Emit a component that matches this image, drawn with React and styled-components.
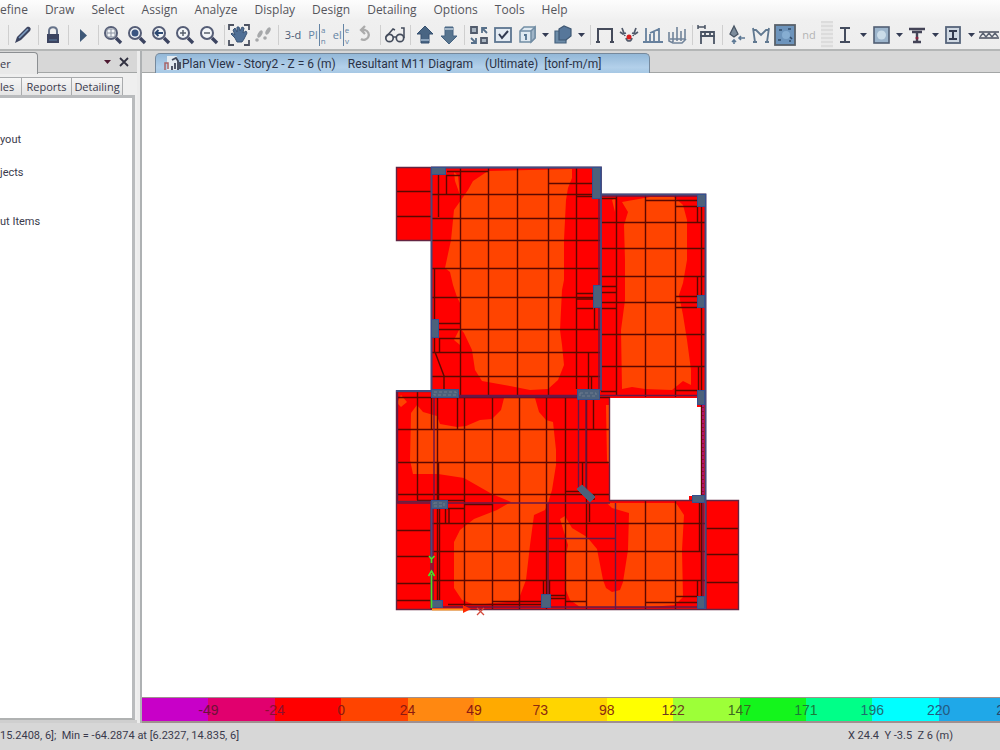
import React from "react";
import styled, { createGlobalStyle } from "styled-components";

const NAVY = "#3c4460";

const GlobalStyle = createGlobalStyle`
  * { box-sizing: border-box; }
  body {
    margin: 0;
    background: #f0f0f0;
    color: #3a3a4c;
    font-family: "Open Sans", "Noto Sans", sans-serif;
    font-size: 11px;
    line-height: 16px;
    overflow-x: hidden;
  }
  button { font: inherit; color: inherit; border: 0; padding: 0; background: none; white-space: pre; }
`;

const Shell = styled.div`
  display: flex;
  flex-direction: column;
  min-height: 100vh;
  overflow: hidden;
`;

const TopArea = styled.header`
  background: linear-gradient(#fdfdfd, #f0f0f0 20px, #ededed);
  border-bottom: 2px solid #b4b6b6;
`;

const MenuBar = styled.nav`
  display: flex;
  gap: 17px;
  height: 20px;
  align-items: center;
  overflow: hidden;
`;

const MenuItem = styled.button`
  color: #55555c;
  font-size: 12px;
  flex: none;
`;

const Toolbar = styled.div`
  display: flex;
  align-items: center;
  height: 29px;
  padding-left: 5px;
  overflow: hidden;
`;

const ToolButton = styled.button`
  flex: none;
  width: 24px;
  height: 24px;
  display: flex;
  align-items: center;
  justify-content: center;
  color: ${(p) => (p.$muted ? "#b4b4b4" : "#4c5a74")};
  svg { display: block; flex: none; }
`;

const Separator = styled.span`
  flex: none;
  width: 6px;
  height: 20px;
  background: linear-gradient(90deg, transparent 3px, #cfcfcf 3px, #cfcfcf 4px, transparent 4px);
`;

const CaretButton = styled.button`
  flex: none;
  width: 12px;
  height: 24px;
  display: flex;
  align-items: center;
  justify-content: center;
`;

const Grip = styled.span`
  flex: none;
  width: 12px;
  height: 27px;
  background: repeating-linear-gradient(#dcdcdc 0 2px, #e9e9e9 2px 4px);
`;

const SplitWord = styled.span`
  display: flex;
  align-items: center;
  color: #6484a4;
`;

const SplitEnd = styled.span`
  display: flex;
  flex-direction: column;
  margin-left: 1px;
  padding-left: 1px;
  border-left: 1px solid #6484a4;
  font-size: 8px;
  line-height: 11px;
`;

const Workspace = styled.main`
  flex: 1;
  display: flex;
`;

const Explorer = styled.aside`
  flex: none;
  width: 137px;
  display: flex;
  flex-direction: column;
  background: #efefef;
  border-bottom: 3px solid #cfcfcf;
`;

const StripBar = styled.div`
  display: flex;
  height: 22px;
  background: #d7d7d7;
  border-bottom: 1px solid #a3a6a6;
`;

const ExplorerTab = styled.button`
  width: 38px;
  height: 22px;
  margin-top: 1px;
  text-align: left;
  background: #e9e9e9;
  border: 1px solid #8c8f92;
  border-width: 1px 1px 0 0;
  border-top-right-radius: 4px;
`;

const StripTools = styled.div`
  flex: 1;
  display: flex;
  justify-content: flex-end;
  align-items: center;
  gap: 8px;
  padding-right: 8px;
  button { display: flex; }
`;

const SubTabs = styled.div`
  display: flex;
  height: 22px;
  padding-top: 4px;
`;

const SubTab = styled.button`
  width: ${(p) => p.$width}px;
  text-align: ${(p) => p.$align || "center"};
  border: 1px solid #a9abad;
  border-width: 1px 1px 0 0;
  background: linear-gradient(#f6f6f6, #e4e4e4);
`;

const TreePane = styled.div`
  flex: 1;
  margin-right: 2px;
  background: #fff;
  border: 3px solid #b9bbbd;
  border-left: 0;
  border-bottom: 2px solid #b0b2b2;
  padding-top: 34px;
  font-family: Roboto, sans-serif;
`;

const TreeItem = styled.div`
  height: 16px;
  margin-bottom: ${(p) => p.$after}px;
  white-space: pre;
`;

const Splitter = styled.div`
  flex: none;
  width: 5px;
  background: #ececec;
  border-right: 2px solid #aeb1b3;
`;

const View = styled.section`
  flex: 1;
  min-width: 0;
  display: flex;
  flex-direction: column;
  background: #fff;
`;

const ViewTab = styled.button`
  display: flex;
  align-items: center;
  width: 495px;
  height: 20px;
  margin: 2px 0 0 13px;
  padding-left: 8px;
  background: linear-gradient(#93b8d8, #b3d0ea 70%, #a6c8e4);
  border: 1px solid #76899c;
  border-bottom: 0;
  border-radius: 5px 5px 0 0;
  color: #2b3246;
  font-family: Roboto, sans-serif;
  font-size: 12px;
  svg { flex: none; }
`;

const TitlePart = styled.span`
  margin-left: ${(p) => p.$gap}px;
`;

const Canvas = styled.div`
  flex: 1;
  display: flex;
  svg { flex: 1; min-width: 0; display: block; }
`;

const Legend = styled.div`
  display: flex;
  height: 26px;
  border: 1px solid #a08f8f;
  border-width: 1px 0 2px;
  overflow: hidden;
`;

const LegendCell = styled.div`
  position: relative;
  flex: ${(p) => p.$span} 0 0;
  background: ${(p) => p.$color};
`;

const LegendLabel = styled.span`
  position: absolute;
  z-index: 1;
  right: 0;
  top: 4px;
  transform: translateX(50%);
  color: ${(p) => p.$ink};
  font-family: "Liberation Sans", Arial, sans-serif;
  font-size: 14px;
`;

const StatusBar = styled.footer`
  display: flex;
  justify-content: space-between;
  height: 27px;
  padding: 5px 47px 0 0;
  background: #d7d7d7;
  font-family: Roboto, sans-serif;
  white-space: pre;
`;

const Icon = ({ children, size = 22 }) => (
  <svg width={size} height={size} viewBox="0 0 22 22" fill="none" stroke={NAVY} strokeWidth="2" aria-hidden="true">
    {children}
  </svg>
);

const Magnifier = ({ children, fill = "#f2f5f8" }) => (
  <Icon>
    <circle cx="9" cy="9" r="6" fill={fill} strokeWidth="2" stroke="#555d76" />
    <path d="M14 14l5 5" strokeWidth="3.4" />
    {children}
  </Icon>
);

const Caret = ({ color = "#343c54" }) => (
  <svg width="7" height="4" viewBox="0 0 7 4" aria-hidden="true">
    <path d="M0 0h7L3.500 4z" fill={color} />
  </svg>
);

const icons = {
  pen: (
    <Icon>
      <path d="M3 19l2-6L15 3c2-1 5 1 3 4L9 16z" fill={NAVY} stroke="none" />
      <path d="M7 14l9-9" stroke="#7fa0c4" strokeWidth="1.600" />
    </Icon>
  ),
  lock: (
    <Icon>
      <path d="M7 11V7c0-5 8-5 8 0v4" stroke="#66738a" />
      <rect x="5" y="10" width="12" height="9" fill={NAVY} stroke="none" />
      <path d="M7 16h8" stroke="#5c80a5" strokeWidth="1" />
    </Icon>
  ),
  run: <Icon><path d="M8 5v13l7-6.500z" fill="#3e5878" stroke="none" /></Icon>,
  zoomWindow: <Magnifier><path d="M5 5h8v8H5zM9 5v8M5 9h8" stroke="#8c94a3" strokeWidth="1" /></Magnifier>,
  zoomFull: <Magnifier><circle cx="9" cy="9" r="3.500" fill="#3b5580" stroke="none" /></Magnifier>,
  zoomPrevious: <Magnifier><path d="M5 9h8M8.500 6L5.500 9l3 3" stroke="#2d4972" /></Magnifier>,
  zoomIn: <Magnifier><path d="M6 9h6M9 6v6" stroke="#58606d" strokeWidth="1.500" /></Magnifier>,
  zoomOut: <Magnifier><path d="M6 9h6" stroke="#58606d" strokeWidth="1.500" /></Magnifier>,
  pan: (
    <Icon>
      <path d="M1 6V1h5M16 1h5v5M21 16v5h-5M6 21H1v-5" stroke="#4d5362" strokeWidth="1.800" />
      <path d="M4 9l3 2-2-5 2-2 2 4V3h2l1 4 2-4 2 1-1 5 3-2 1 2-3 6-2 3H9l-2-4-4-4z" fill="#507096" stroke="#3b5576" strokeWidth="1" />
    </Icon>
  ),
  walk: (
    <Icon>
      <g fill="#a6a8aa" stroke="none">
        <ellipse cx="8" cy="10" rx="2" ry="4" transform="rotate(30 8 10)" />
        <circle cx="5" cy="16" r="1.800" />
        <ellipse cx="16" cy="7" rx="2" ry="4" transform="rotate(30 16 7)" />
        <circle cx="13" cy="14" r="1.800" />
      </g>
    </Icon>
  ),
  rotate: <Icon><path d="M7 6h4a5 5 0 1 1-4 9M11 2L7 6l4 4" stroke="#ababab" strokeWidth="2.300" /></Icon>,
  glasses: (
    <Icon>
      <circle cx="5.500" cy="14" r="3.700" stroke="#444c5c" strokeWidth="1.700" />
      <circle cx="16" cy="14" r="3.700" stroke="#444c5c" strokeWidth="1.700" />
      <path d="M9 13h3M2 13L9 5l2 1M20 14V4h-3" stroke="#444c5c" strokeWidth="1.500" />
    </Icon>
  ),
  up: <Icon><path d="M11 2l8 8h-4v9H7v-9H3z" fill="#496583" stroke="#365170" strokeWidth="1" /><path d="M7 16h8" stroke="#8ba3bc" /></Icon>,
  down: <Icon><path d="M11 20l-8-8h4V3h8v9h4z" fill="#58758f" stroke="#456381" strokeWidth="1" /><path d="M7 5h8" stroke="#a4b7c9" /></Icon>,
  shrink: (
    <Icon>
      <path d="M3 3h6v6H3zM13 14h6v5h-6z" fill="#a8b4c0" stroke="#505a6b" strokeWidth="1.800" />
      <path d="M19 9l-5-5m0 5V4h5M3 14l5 5m0-5v5H3" stroke="#57708a" strokeWidth="1.800" />
    </Icon>
  ),
  options: <Icon><rect x="3" y="4" width="16" height="14" fill="#e3ebf3" stroke="#5c7590" strokeWidth="1.800" /><path d="M7 10l3 4 6-7" stroke="#303a52" /></Icon>,
  cube: (
    <Icon>
      <path d="M4 7l4-4h11v11l-4 4H4z" fill="#dfe9f1" stroke="#728da4" strokeWidth="1.500" />
      <path d="M15 7l4-4v11l-4 4z" fill="#9fb4c7" stroke="#728da4" strokeWidth="1.500" />
      <path d="M4 7h11" stroke="#728da4" strokeWidth="1.500" />
      <path d="M10 10v6M8 11h2" stroke="#54738f" strokeWidth="1.800" />
    </Icon>
  ),
  solid: (
    <Icon>
      <path d="M3 7h11v12H3z" fill="#6d8ca8" stroke="#45617d" strokeWidth="1.200" />
      <path d="M7 5l5-3 7 3v7l-5 4H7z" fill="#57779a" stroke="#3f5873" strokeWidth="1.200" />
    </Icon>
  ),
  frame: <Icon><path d="M4 19V5h14v14M2 18h4M16 18h4" stroke="#454b5b" /></Icon>,
  joint: (
    <Icon>
      <path d="M4 4l3 8M18 4l-3 8M2 8l3 2 3-1M20 8l-3 2-3-1M8 14c1 4 5 4 6 0" stroke="#515a6b" strokeWidth="1.700" />
      <circle cx="11" cy="13" r="2.500" fill="#d81e1e" stroke="none" />
    </Icon>
  ),
  bars: <Icon><path d="M1 18h20M4 18V4M8 18V10M12 18V8M17 18V4M8 9l9-4M2 18h3" stroke="#66809d" strokeWidth="1.800" /></Icon>,
  surface: <Icon><path d="M3 8v9l4 2h9l4-4M7 18V8M11 17V3M15 17V7M19 15V5M4 15h15" stroke="#71849a" strokeWidth="1.600" /></Icon>,
  deformed: (
    <Icon>
      <path d="M5 20V8h13v12M4 12h15M9 8v4M14 8v4" stroke="#4a5464" strokeWidth="1.800" />
      <path d="M2 1v4M9 1v4M2 3h7" stroke="#4a5464" strokeWidth="1.500" />
    </Icon>
  ),
  load: (
    <Icon>
      <path d="M8 2l-4 8 4 3 4-3z" fill="#7d8c9b" stroke="#485564" strokeWidth="1.300" />
      <path d="M19 14h-6M15 12l-2 2 2 2M8 20v-4M6 18l2-2 2 2" stroke="#5c7894" strokeWidth="1.600" />
    </Icon>
  ),
  moment: <Icon><path d="M3 4l2 14M19 4l-2 14M3 6h3l5 5 5-5h3M3 18h4M15 18h4" stroke="#607890" strokeWidth="1.800" /></Icon>,
  shell: (
    <Icon>
      <rect x="1" y="1" width="20" height="20" fill="#6d94bc" stroke="#59616a" strokeWidth="1.800" />
      <path d="M5 6h3M14 5h3M4 16h3M16 13l2 2M15 17h2" stroke="#304b69" strokeWidth="1.700" />
      <circle cx="12" cy="11" r="4" fill="#86add2" stroke="none" />
    </Icon>
  ),
  steel: <Icon><path d="M6 4h10M6 18h10M11 4v14" stroke="#444c5e" /></Icon>,
  concrete: <Icon><rect x="4" y="3" width="15" height="16" fill="#9db5cc" stroke="#515e73" strokeWidth="1.600" /><circle cx="11.500" cy="11" r="4.500" fill="#cbdce9" stroke="none" /></Icon>,
  composite: <Icon><path d="M3 5h16M6 8h10M11 8v9M7 18h8" stroke="#444457" strokeWidth="2.400" /><circle cx="11" cy="14" r="1.500" fill="#8a2540" stroke="none" /></Icon>,
  column: <Icon><rect x="4" y="3" width="14" height="16" fill="#cfd8e2" stroke="#56647a" strokeWidth="1.800" /><path d="M7 7h8M7 15h8M11 7v8" stroke="#333b50" /></Icon>,
  joist: <Icon><path d="M1 8h20M1 14h20" stroke="#4b5060" strokeWidth="1.600" /><path d="M2 13l3-4 3 4 3-4 3 4 3-4 3 4" stroke="#5c6473" strokeWidth="1.400" /></Icon>,
};

const ViewGlyph = () => (
  <svg width="18" height="16" viewBox="0 0 18 16" fill="none" aria-hidden="true">
    <path d="M3 0h10v14H3z" fill="#e3ebf1" />
    <path d="M1 14V7h3v6" stroke="#a86467" strokeWidth="1.500" />
    <path d="M8 4l4-2 2 3v9M8 14v-4M11 13V7M16 13V6" stroke="#3f4759" strokeWidth="1.800" />
  </svg>
);

const Stacked = ({ left, top, bottom }) => (
  <SplitWord>
    <span>{left}</span>
    <SplitEnd>
      <span>{top}</span>
      <span>{bottom}</span>
    </SplitEnd>
  </SplitWord>
);

const toolbar = [
  "|", ["pen", "Draw"], "|", ["lock", "Lock model"], "|", ["run", "Run analysis"], "|",
  ["zoomWindow", "Zoom window"], ["zoomFull", "Zoom full"], ["zoomPrevious", "Previous zoom"],
  ["zoomIn", "Zoom in"], ["zoomOut", "Zoom out"], "|", ["pan", "Pan"], ["walk", "Walk"], "|",
  ["3d", "3-d view"], ["plan", "Plan view"], ["elev", "Elevation view"], ["rotate", "Rotate view"], "|",
  ["glasses", "Perspective"], "|", ["up", "Story up"], ["down", "Story down"], "|",
  ["shrink", "Shrink objects"], ["options", "Display options"], ["cube", "Assigns"], "v", ["solid", "Shading"], "v", "|",
  ["frame", "Undeformed shape"], ["joint", "Joint loads"], ["bars", "Frame loads"], ["surface", "Shell loads"], "|",
  ["deformed", "Deformed shape"], "|", ["load", "Reactions"], ["moment", "Frame forces"], ["shell", "Shell forces"],
  ["nd", "Nd"], "#", ["steel", "Steel frame design"], "v", ["concrete", "Concrete frame design"], "v",
  ["composite", "Composite beam design"], "v", ["column", "Composite column design"], "v", ["joist", "Joist design"],
];

const glyphs = {
  "3d": "3-d",
  nd: "nd",
  plan: <Stacked left="Pl" top="a" bottom="n" />,
  elev: <Stacked left="el" top="e" bottom="v" />,
};

const menus = ["efine", "Draw", "Select", "Assign", "Analyze", "Display", "Design", "Detailing", "Options", "Tools", "Help"];

const legend = [
  ["#c800c8", "-49", "#6d1238"],
  ["#e1006e", "-24", "#8b1030"],
  ["#ff0000", "0", "#8b1a10"],
  ["#ff4400", "24", "#8b1a10"],
  ["#ff8811", "49", "#8b1a10"],
  ["#ffaa00", "73", "#8b2a10"],
  ["#ffd500", "98", "#8b2a10"],
  ["#ffff00", "122", "#6d3a20"],
  ["#9dff38", "147", "#3c6a20"],
  ["#14f51c", "171", "#1c7a38"],
  ["#00ff88", "196", "#1f6c70"],
  ["#00ffff", "220", "#245a80"],
  ["#1fa8e8", "2", "#26466a"],
];

const slabs = [
  [396, 167, 35, 73], [431, 167, 170, 230], [601, 194, 105, 204],
  [396, 391, 214, 112], [396, 501, 343, 108], [701, 397, 5, 106],
];

const lowMoment = [
  "488,171 473,181 468,190 454,210 451,240 445,268 450,272 453,285 457,297 460,303 460,328 464,333 472,350 475,370 482,381 510,386 530,390 548,389 558,380 564,365 562,345 560,330 562,290 564,280 564,240 566,200 568,188 572,178 572,169",
  "622,202 650,197 674,197 683,205 687,220 687,260 683,283 679,295 683,315 687,340 691,370 691,385 683,381 672,390 645,389 632,387 622,389 621,330 625,300 625,260 624,225 628,212",
  "411,413 417,405 423,412 437,416 440,424 457,427 466,426 480,420 492,419 501,410 504,398 535,398 539,412 546,420 553,422 556,450 556,465 552,490 548,503 545,510 534,515 530,545 526,580 518,601 495,603 475,605 462,600 454,588 454,542 460,530 474,519 497,510 511,502 492,494 464,478 438,474 413,474 410,460",
  "560,519 565,516 572,528 587,537 597,549 603,580 606,588 612,592 620,590 623,582 628,550 629,513 612,508 607,503 676,503 684,515 682,550 683,597 675,605 650,607 580,607 570,600 565,588 565,560 568,545",
  "606,405 609,405 609,465 607,460",
  "454,172 458,176 460,195 455,181",
  "612,200 615,198 615,212",
  "397,403 401,395 407,402 401,407",
  "460,328 460,345 454,340",
];

const meshLines = [
  "M396 191.500H431M396 216.500H431",
  "M460.500 168V396M488.500 168V396M517.500 168V396M548.500 168V396M576.500 168V389",
  "M431 194.500H601M431 218.500H601M431 240.500H601M431 268.500H601M431 297.500H601M431 329.500H601M431 352.500H601M431 376.500H601",
  "M438.500 175V217M446.500 175V194M434.500 268V352M446 175.500H460M447 171.500H488M548 183.500H593M576 196.500H593",
  "M439 323.500H460M439 338.500H460M439.500 338V352M435 352L444 376V390",
  "M576 293.500H593M576 299H593M576 308.500H593M594.500 308V329M588.500 352V390M591.500 376V390",
  "M616.500 194V396M645.500 194V397M675.500 194V397M701.500 207V609M601 222.500H706M601 248.500H706M601 276.500H706M601 302.500H706M601 334.500H706M601 366.500H706",
  "M601 198.500H616M645 200.500H698M675 206.500H698M697.500 206V222M601 286.500H616M601 292.500H616M601 308.500H616M675 296.500H697M675 307.500H697M697.500 276V296M698.500 366V390M675 390.500H697M601 391.500H616",
  "M417.500 391V500M437.500 397V500M464.500 397V609M492.500 397V609M519.500 397V609M546.500 397V609M565.500 397V609M586.500 400V609",
  "M396 429.500H610M396 462.500H610M396 494.500H610M396 397.500H610",
  "M431.500 397V429M457.500 397V429M438.500 462V500M593.500 400V429M582.500 462V489M594 494V500M565 491.500H580M417 500.500H464M447 508.500H464M464 504.500H492M445.500 508V523M449 508V523",
  "M396 530.500H431M396 556.500H431M396 583.500H431M396 600.500H431",
  "M431 523.500H706M431 551.500H706M431 580.500H706M437.500 508V600M439.500 508V600M448 604.500H541M492 601.500H541",
  "M645.500 501V609M675.500 501V609M589.500 503V522M697.500 580V597M675 596.500H697M645 602.500H697M550 595.500H565M550 598.500H565M565 601.500H586M543.500 580V594M549.500 580V594M699.500 503V551",
  "M706 528.500H739M706 554.500H739M706 582.500H739",
];

const beams = "M431 395.500H706M431 397H577M396 503H610M578.500 400V489M586 400V489M599 199V389M548 503V594M615.500 503V609M548 538.500H615M434 394V508M433 508V600M431 607H706M601 196H706M397.500 391V503M703 397V609";

const columnRects = [
  [431, 167, 15, 8], [592, 167, 9, 32], [697, 194, 9, 13], [593, 285, 9, 23], [697, 295, 8, 13],
  [431, 319, 8, 19], [431, 389, 28, 9], [577, 389, 23, 11], [697, 390, 8, 15], [431, 500, 17, 9],
  [692, 495, 13, 8], [431, 600, 12, 8], [541, 594, 10, 14], [697, 596, 8, 13],
];

const PlanDrawing = () => (
  <svg viewBox="142 73 858 624" role="img" aria-label="Resultant M11 contours on the floor plan">
    <g fill="#ff0000">
      {slabs.map(([x, y, w, h]) => <rect key={`${x}-${y}`} x={x} y={y} width={w} height={h} />)}
    </g>
    <g fill="#ff4400">
      {lowMoment.map((points) => <polygon key={points} points={points} />)}
    </g>
    <rect x="610" y="398" width="92" height="102" fill="#fff" />
    <path d="M697 397h6v10h-6zM689 496h14v5h-14z" fill="#f00" />
    <g fill="none" stroke="#5c0800" strokeWidth="1.400">
      {meshLines.map((d) => <path key={d} d={d} />)}
    </g>
    <path d={beams} fill="none" stroke="#661848" strokeWidth="1.400" />
    <path d="M703 404V494" stroke="#c0107c" strokeWidth="1.500" strokeDasharray="3 1" />
    <path
      d="M396.500 167.500V240.500H431.500V391H396.500V609.500H738.500V500.500H705.500V194.500H601V167.500ZM431.500 167V240M601 194V391M396 391.500H431M396 501.500H431V609M609.500 398V500.500H706V609"
      fill="none"
      stroke="#642442"
      strokeWidth="1.400"
    />
    <path d="M431 167.500H601V390M601 194.500H705.500V609M431.500 167V391H396M431.500 501V558" fill="none" stroke="#444c80" strokeWidth="1.800" />
    <g fill="#4c617b" stroke="#345190" strokeWidth="1">
      {columnRects.map(([x, y, w, h]) => <rect key={`${x}-${y}`} x={x + 0.5} y={y + 0.5} width={w - 1} height={h - 1} />)}
      <path d="M577 489l5-4 13 12-5 5z" stroke="#4c617b" />
    </g>
    <path d="M434 392h22v3h-22zM580 393h16v3h-16zM434 503h10v3h-10z" fill="none" stroke="#6f7c8e" strokeDasharray="3 2" />
    <path d="M431.500 608V574M428.500 576l3-5 3 5M429 556l2.500 3 3-3M431.500 559v4" fill="none" stroke="#42e52a" strokeWidth="1.600" />
    <path d="M432 609.500H464" stroke="#ff9a20" strokeWidth="2" />
    <path d="M463 605l8 4-8 4z" fill="#ff2a00" />
    <path d="M477 608l7 7M484 608l-7 7" stroke="#d24a3c" strokeWidth="1.300" />
  </svg>
);

export default function App() {
  return (
    <Shell>
      <GlobalStyle />
      <TopArea>
        <MenuBar>
          {menus.map((name) => <MenuItem key={name}>{name}</MenuItem>)}
        </MenuBar>
        <Toolbar>
          {toolbar.map((item, i) => {
            if (item === "|") return <Separator key={i} />;
            if (item === "#") return <Grip key={i} />;
            if (item === "v") return <CaretButton key={i} aria-label="More"><Caret /></CaretButton>;
            const [id, label] = item;
            return (
              <ToolButton key={i} aria-label={label} $muted={id === "nd"}>
                {icons[id] || glyphs[id]}
              </ToolButton>
            );
          })}
        </Toolbar>
      </TopArea>
      <Workspace>
        <Explorer>
          <StripBar>
            <ExplorerTab>er</ExplorerTab>
            <StripTools>
              <button aria-label="Panel menu"><Caret color="#4d1830" /></button>
              <button aria-label="Close panel">
                <svg width="10" height="10" viewBox="0 0 10 10" stroke="#303040" strokeWidth="1.800" aria-hidden="true">
                  <path d="M1 1l8 8M9 1l-8 8" />
                </svg>
              </button>
            </StripTools>
          </StripBar>
          <SubTabs>
            <SubTab $width={22} $align="left">les</SubTab>
            <SubTab $width={50}>Reports</SubTab>
            <SubTab $width={51}>Detailing</SubTab>
          </SubTabs>
          <TreePane>
            <TreeItem $after={17}>yout</TreeItem>
            <TreeItem $after={33}>jects</TreeItem>
            <TreeItem $after={0}>ut Items</TreeItem>
          </TreePane>
        </Explorer>
        <Splitter />
        <View>
          <StripBar>
            <ViewTab>
              <ViewGlyph />
              <TitlePart $gap={0}>Plan View - Story2 - Z = 6 (m)</TitlePart>
              <TitlePart $gap={12}>Resultant M11 Diagram</TitlePart>
              <TitlePart $gap={12}>(Ultimate)</TitlePart>
              <TitlePart $gap={6}>[tonf-m/m]</TitlePart>
            </ViewTab>
          </StripBar>
          <Canvas><PlanDrawing /></Canvas>
          <Legend>
            {legend.map(([color, text, ink], i) => (
              <LegendCell key={text} $color={color} $span={i === 12 ? 61 : 66}>
                <LegendLabel $ink={ink}>{text}</LegendLabel>
              </LegendCell>
            ))}
          </Legend>
        </View>
      </Workspace>
      <StatusBar>
        <span>{"15.2408, 6];  Min = -64.2874 at [6.2327, 14.835, 6]"}</span>
        <span>{"X 24.4  Y -3.5  Z 6 (m)"}</span>
      </StatusBar>
    </Shell>
  );
}
